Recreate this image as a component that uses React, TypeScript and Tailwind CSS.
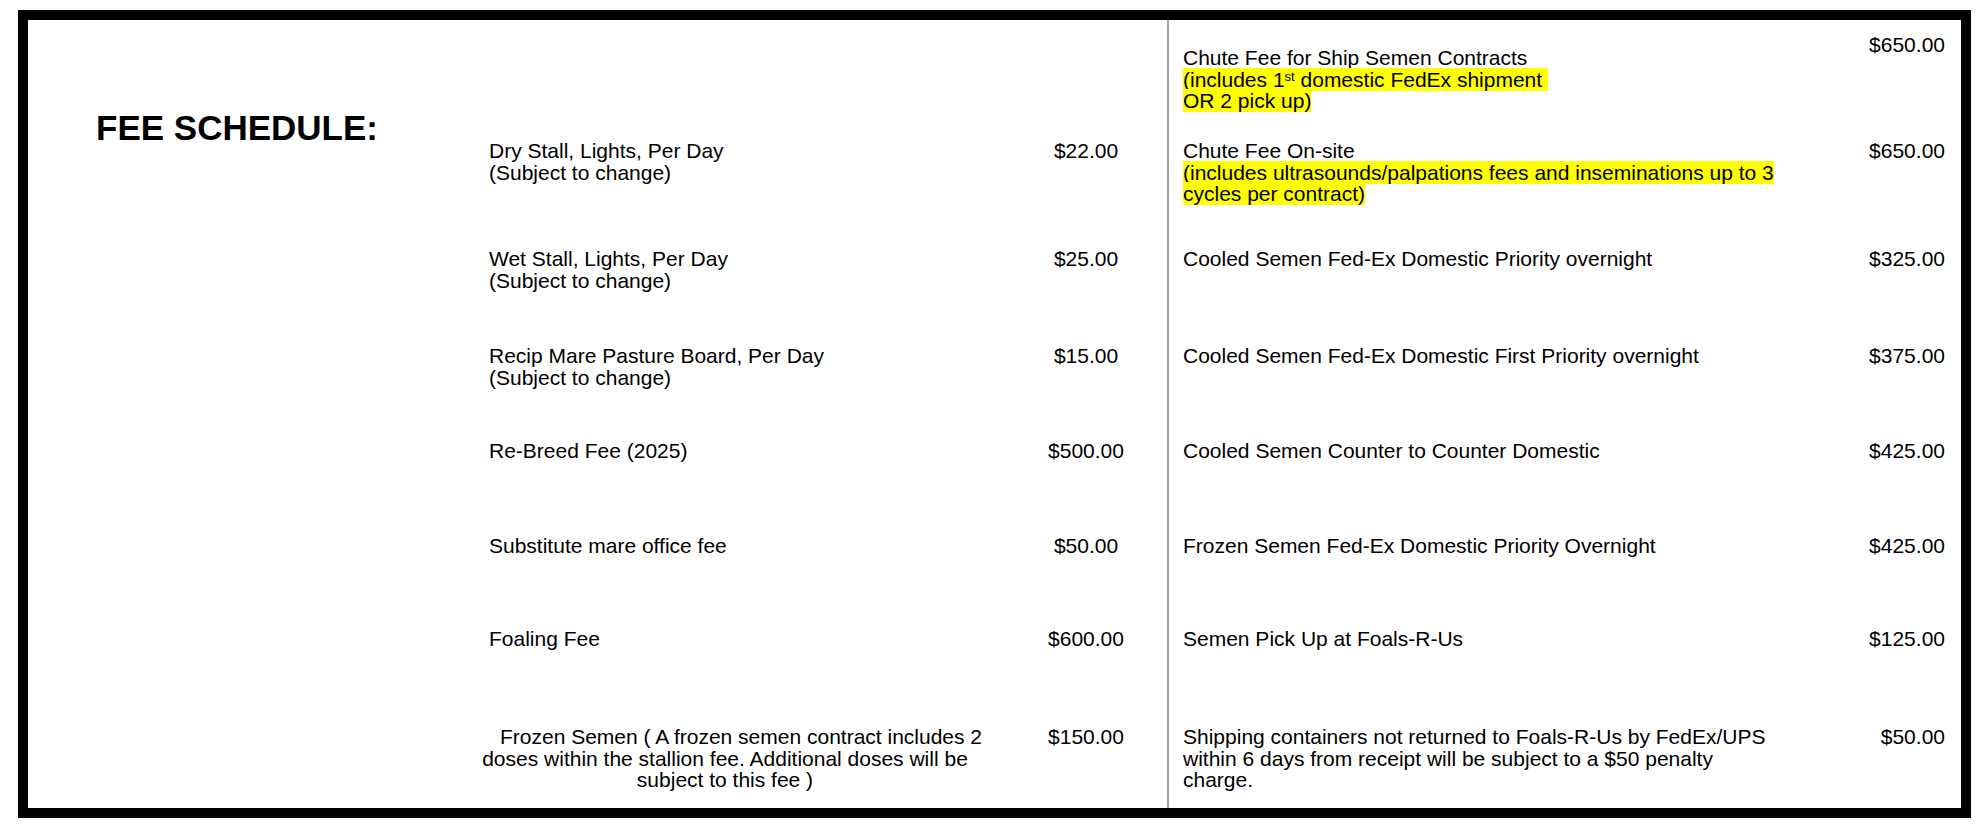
import React from 'react';

type Row = {
  h: string;
  label: React.ReactNode;
  price: string;
};

const leftRows: Row[] = [
  { h: 'h-[108px]', label: <>Dry Stall, Lights, Per Day<br />(Subject to change)</>, price: '$22.00' },
  { h: 'h-[97px]', label: <>Wet Stall, Lights, Per Day<br />(Subject to change)</>, price: '$25.00' },
  { h: 'h-[95px]', label: <>Recip Mare Pasture Board, Per Day<br />(Subject to change)</>, price: '$15.00' },
  { h: 'h-[95px]', label: 'Re-Breed Fee (2025)', price: '$500.00' },
  { h: 'h-[93px]', label: 'Substitute mare office fee', price: '$50.00' },
  { h: 'h-[98px]', label: 'Foaling Fee', price: '$600.00' },
];

const Hi = ({ children }: { children: React.ReactNode }) => (
  <span className="bg-[#ffff00]">{children}</span>
);

const rightRows: Row[] = [
  {
    h: 'h-[108px]',
    label: (
      <>
        Chute Fee On-site
        <br />
        <Hi>(includes ultrasounds/palpations fees and inseminations up to 3</Hi>
        <br />
        <Hi>cycles per contract)</Hi>
      </>
    ),
    price: '$650.00',
  },
  { h: 'h-[97px]', label: 'Cooled Semen Fed-Ex Domestic Priority overnight', price: '$325.00' },
  { h: 'h-[95px]', label: 'Cooled Semen Fed-Ex Domestic First Priority overnight', price: '$375.00' },
  { h: 'h-[95px]', label: 'Cooled Semen Counter to Counter Domestic', price: '$425.00' },
  { h: 'h-[93px]', label: 'Frozen Semen Fed-Ex Domestic Priority Overnight', price: '$425.00' },
  { h: 'h-[98px]', label: 'Semen Pick Up at Foals-R-Us', price: '$125.00' },
  {
    h: 'h-[93px]',
    label: (
      <>
        Shipping containers not returned to Foals-R-Us by FedEx/UPS
        <br />
        within 6 days from receipt will be subject to a $50 penalty
        <br />
        charge.
      </>
    ),
    price: '$50.00',
  },
];

export default function App() {
  return (
    <div className="min-h-screen bg-white font-['Liberation_Sans',Arial,sans-serif] text-black text-[21px] leading-[21.5px]">
      <div className="ml-[18px] pt-[10px]">
        <div className="flex w-[1953px] h-[808px] border-[10px] border-black">
          {/* left half */}
          <div className="flex w-[1139px]">
            <div className="w-[452px] pt-[90px] pl-[68px]">
              <h1 className="text-[35px] leading-[35px] font-bold">FEE SCHEDULE:</h1>
            </div>
            <div className="flex flex-col w-[687px]">
              <div className="h-[108px]" />
              {leftRows.map((row, i) => (
                <div key={i} className={`flex ${row.h} pt-[12px]`}>
                  <div className="w-[490px] pl-[9px]">{row.label}</div>
                  <div className="w-[160px] ml-[36px] text-center">{row.price}</div>
                </div>
              ))}
              <div className="flex h-[93px] pt-[12px]">
                <div className="flex flex-col items-center w-[490px]">
                  <div className="whitespace-nowrap pl-[32px]">Frozen Semen ( A frozen semen contract includes 2</div>
                  <div className="whitespace-nowrap">doses within the stallion fee. Additional doses will be</div>
                  <div className="whitespace-nowrap">subject to this fee )</div>
                </div>
                <div className="w-[160px] ml-[36px] text-center">$150.00</div>
              </div>
            </div>
          </div>

          <div className="w-[2px] bg-[#9f9f9f]" />

          {/* right half */}
          <div className="flex flex-col flex-1 pl-[14px] pr-[16px]">
            <div className="flex h-[108px]">
              <div className="flex-1 pt-[27px]">
                Chute Fee for Ship Semen Contracts
                <br />
                <Hi>
                  (includes 1<span className="relative -top-[6px] text-[13px] leading-none">st</span> domestic FedEx shipment{'\u00a0'}
                </Hi>
                <br />
                <Hi>OR 2 pick up)</Hi>
              </div>
              <div className="w-[140px] pt-[14px] text-right">$650.00</div>
            </div>
            {rightRows.map((row, i) => (
              <div key={i} className={`flex ${row.h} pt-[12px]`}>
                <div className="flex-1">{row.label}</div>
                <div className="w-[140px] text-right">{row.price}</div>
              </div>
            ))}
          </div>
        </div>
      </div>
    </div>
  );
}
